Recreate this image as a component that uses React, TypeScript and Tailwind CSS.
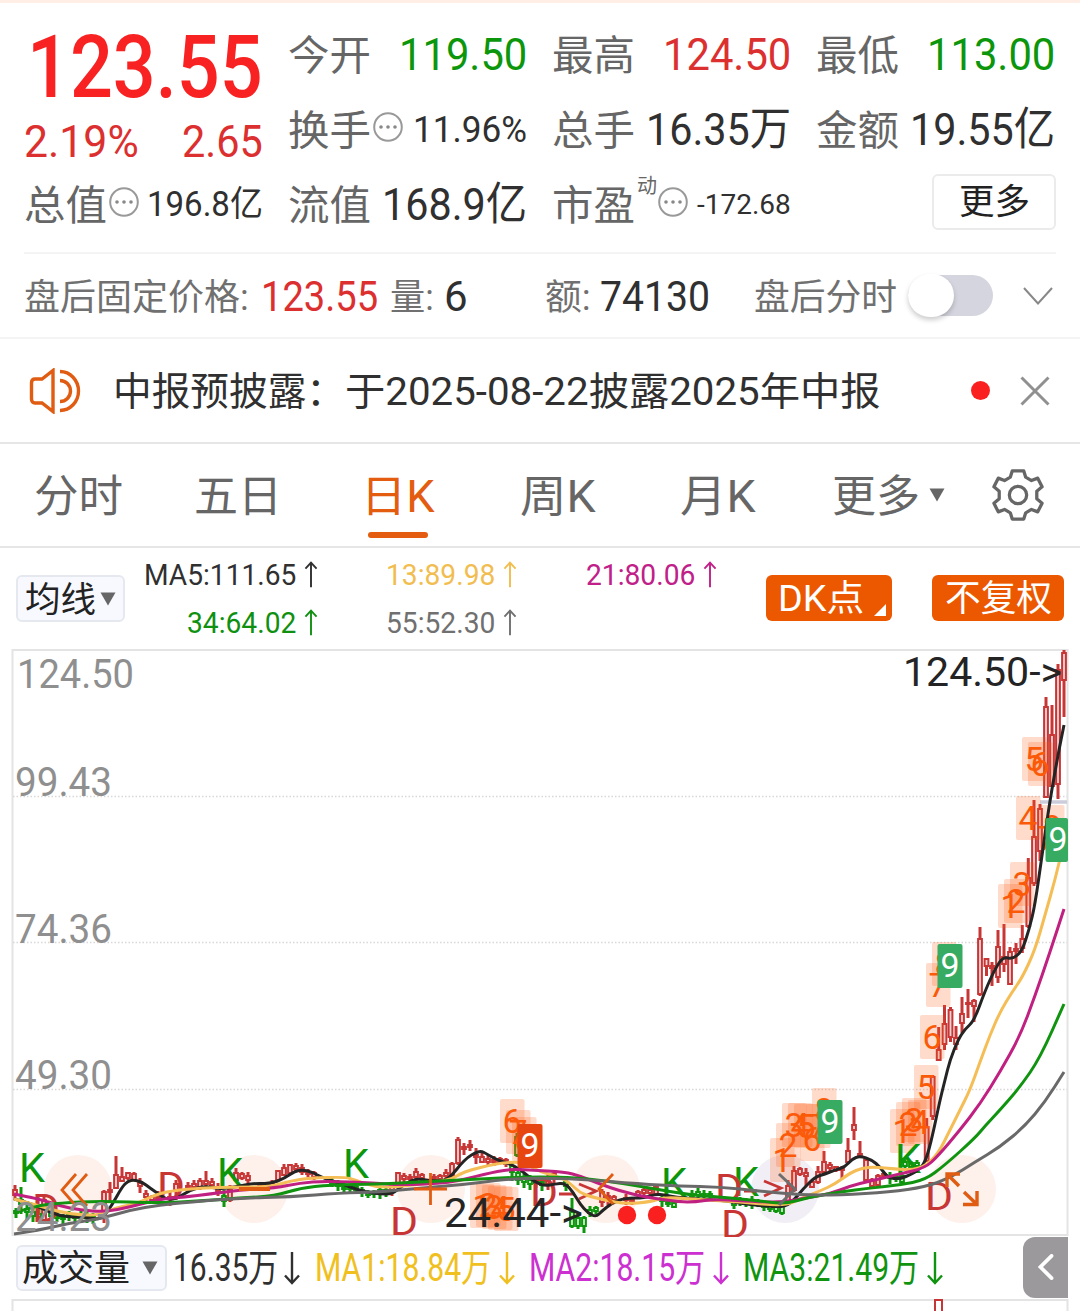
import { useLayoutEffect, useRef, useState } from 'react';
import type { ReactNode } from 'react';

type Point = [number, number];
// x, high, low, body top, body bottom
type Candle = [number, number, number, number, number];

interface FitProps {
  className: string;
  children: ReactNode;
}

// Squeezes a single line of text into the width of its box
function Fit({ className, children }: FitProps) {
  const box = useRef<HTMLSpanElement>(null);
  const text = useRef<HTMLSpanElement>(null);
  const [scale, setScale] = useState(1);

  useLayoutEffect(() => {
    if (box.current && text.current) {
      setScale(box.current.clientWidth / text.current.offsetWidth);
    }
  }, []);

  return (
    <span ref={box} className={`flex shrink-0 items-center whitespace-nowrap leading-none ${className}`}>
      <span ref={text} className="inline-block shrink-0 origin-left" style={{ transform: `scaleX(${scale})` }}>
        {children}
      </span>
    </span>
  );
}

function MoreDots({ className = '' }: { className?: string }) {
  return (
    <svg viewBox="0 0 30 30" className={`size-[30px] shrink-0 ${className}`} fill="none">
      <circle cx="15" cy="15" r="13.8" stroke="#999" strokeWidth="2" />
      <circle cx="8" cy="15" r="1.8" fill="#888" />
      <circle cx="15" cy="15" r="1.8" fill="#888" />
      <circle cx="22" cy="15" r="1.8" fill="#888" />
    </svg>
  );
}

function Trend({ down = false, className = '' }: { down?: boolean; className?: string }) {
  return (
    <svg viewBox="0 0 16 34" className={`shrink-0 ${className}`} fill="none" stroke="currentColor" strokeWidth="2.4">
      <path d={down ? 'M8 1V32M1 24.5L8 32L15 24.5' : 'M8 33V2M1 9.5L8 2L15 9.5'} />
    </svg>
  );
}

function Caret({ className = '' }: { className?: string }) {
  return (
    <svg viewBox="0 0 16 14" className={`h-[14px] w-4 shrink-0 ${className}`} fill="#666">
      <path d="M0.5 0.5H15.5L8 13.5Z" />
    </svg>
  );
}

function Quote({ label, value, tone, size }: { label: string; value: string; tone: string; size: string }) {
  return (
    <div className="flex items-center justify-between">
      <Fit className="w-[83px] pt-[3px] text-[41px] text-[#666]">{label}</Fit>
      <Fit className={`${size} text-[45px] ${tone}`}>{value}</Fit>
    </div>
  );
}

function Header() {
  return (
    <section className="grid h-[236px] grid-cols-[239px_239px_239px_239px] grid-rows-[75px_75px_75px] gap-x-[25px] pt-[11px] pl-6">
      <div className="row-span-2 flex flex-col">
        <div className="flex h-[94px] items-end">
          <Fit className="ml-[3px] h-[88px] w-[236px] text-[88px] font-medium text-[#f92222]">123.55</Fit>
        </div>
        <div className="mt-[7px] flex h-[46px] items-center justify-between text-[#dc3030]">
          <Fit className="w-[115px] text-[45px]">2.19%</Fit>
          <Fit className="w-[81px] text-[45px]">2.65</Fit>
        </div>
      </div>
      <Quote label="今开" value="119.50" tone="text-[#0c960c]" size="w-[128px]" />
      <Quote label="最高" value="124.50" tone="text-[#dc3030]" size="w-[128px]" />
      <Quote label="最低" value="113.00" tone="text-[#0c960c]" size="w-[128px]" />
      <div className="flex items-center">
        <Fit className="w-[83px] pt-[3px] text-[41px] text-[#666]">换手</Fit>
        <MoreDots className="mb-1.5 ml-0.5" />
        <Fit className="ml-auto w-[114px] text-[37px] text-[#303030]">11.96%</Fit>
      </div>
      <Quote label="总手" value="16.35万" tone="text-[#303030]" size="w-[145px]" />
      <Quote label="金额" value="19.55亿" tone="text-[#303030]" size="w-[145px]" />
      <div className="flex items-center">
        <Fit className="w-[83px] pt-[3px] text-[41px] text-[#666]">总值</Fit>
        <MoreDots className="mb-1.5 ml-0.5" />
        <Fit className="ml-auto w-[116px] text-[35px] text-[#303030]">196.8亿</Fit>
      </div>
      <Quote label="流值" value="168.9亿" tone="text-[#303030]" size="w-[145px]" />
      <div className="flex items-center">
        <Fit className="w-[83px] pt-[3px] text-[41px] text-[#666]">市盈</Fit>
        <Fit className="mb-[38px] ml-0.5 w-5 text-[20px] text-[#666]">动</Fit>
        <MoreDots className="mb-1.5 ml-px" />
        <Fit className="ml-auto w-[94px] text-[28px] text-[#303030]">-172.68</Fit>
      </div>
      <div className="-mr-px flex items-center justify-end">
        <button className="mb-[5px] flex h-14 w-[124px] items-center justify-center rounded-md border-2 border-[#ebebeb]">
          <Fit className="w-[71px] text-[35px] text-[#222]">更多</Fit>
        </button>
      </div>
    </section>
  );
}

function AfterHours() {
  return (
    <section className="flex h-[84px] items-center pl-6 text-[42px] text-[#303030]">
      <Fit className="w-[225px] pt-[6px] text-[36px] text-[#707070]">盘后固定价格:</Fit>
      <Fit className="ml-[12px] w-[117px] pt-1 text-[#dc3030]">123.55</Fit>
      <Fit className="ml-[12px] w-[44px] pt-[6px] text-[36px] text-[#707070]">量:</Fit>
      <Fit className="ml-[10px] w-6 pt-1">6</Fit>
      <Fit className="ml-[77px] w-[46px] pt-[6px] text-[36px] text-[#707070]">额:</Fit>
      <Fit className="ml-[9px] w-[110px] pt-1">74130</Fit>
      <Fit className="ml-[44px] w-[143px] pt-[6px] text-[36px] text-[#707070]">盘后分时</Fit>
      <div className="ml-[11px] flex h-[41px] w-[85px] shrink-0 items-center rounded-full bg-[#d5d5df]">
        <div className="h-[43px] w-[46px] shrink-0 rounded-full bg-white shadow-[0_3px_5px_rgba(0,0,0,0.2)]" />
      </div>
      <svg viewBox="0 0 30 18" className="mt-0.5 ml-[30px] h-[18px] w-[30px] shrink-0" fill="none" stroke="#888" strokeWidth="2">
        <path d="M1 1L15 16.5L29 1" />
      </svg>
    </section>
  );
}

function Notice() {
  return (
    <section className="flex h-[105px] items-center pl-[29px]">
      <svg viewBox="0 0 52 46" className="h-[46px] w-[52px] shrink-0" fill="none" stroke="#e05c12" strokeWidth="3.4">
        <path d="M24 2.5V43.5L13 35H6Q2.5 35 2.5 31V15Q2.5 11 6 11H13Z" />
        <path d="M31 12.5A10.5 10.5 0 0 1 31 33.5" />
        <path d="M31 3.5A18.5 19.5 0 0 1 31 42.5" />
      </svg>
      <Fit className="ml-[32px] w-[232px] pt-[3px] text-[39px] text-[#303030]">中报预披露：</Fit>
      <Fit className="w-[536px] pt-[3px] text-[39px] text-[#303030]">于2025-08-22披露2025年中报</Fit>
      <div className="ml-[90px] size-[19px] shrink-0 rounded-full bg-[#fa2020]" />
      <svg viewBox="0 0 30 30" className="ml-[30px] size-[30px] shrink-0" fill="none" stroke="#909090" strokeWidth="3">
        <path d="M1.5 1.5L28.5 28.5M28.5 1.5L1.5 28.5" />
      </svg>
    </section>
  );
}

function Tabs() {
  return (
    <nav className="flex h-[103px] items-center pl-[34px] text-[44px] text-[#666]">
      <Fit className="w-[89px] pt-1">分时</Fit>
      <Fit className="ml-[71px] w-[88px] pt-1">五日</Fit>
      <div className="ml-[79px] flex h-full w-[74px] flex-col items-center">
        <div className="flex h-[88px] items-center pt-[18px]">
          <Fit className="w-[74px] text-[#e35c10]">日K</Fit>
        </div>
        <div className="h-1.5 w-[60px] shrink-0 rounded-full bg-[#e35c10]" />
      </div>
      <Fit className="ml-[85px] w-[76px] pt-1">周K</Fit>
      <Fit className="ml-[84px] w-[76px] pt-1">月K</Fit>
      <Fit className="ml-[76px] w-[88px] pt-1">更多</Fit>
      <Caret className="ml-[9px]" />
      <svg viewBox="-27 -27 54 54" className="ml-[47px] size-[52px] shrink-0" fill="none" stroke="#666" strokeWidth="3.4" strokeLinejoin="round">
        <path d="M-6 -25H6L8 -18.5L14 -15L20.5 -17.5L25 -8.5L19.500 -4V4L25 8.500L20.500 17.500L14 15L8 18.500L6 25H-6L-8 18.500L-14 15L-20.500 17.500L-25 8.500L-19.500 4V-4L-25 -8.500L-20.500 -17.500L-14 -15L-8 -18.500Z" />
        <circle r="9" />
      </svg>
    </nav>
  );
}

function Average({ text, tone, size }: { text: string; tone: string; size: string }) {
  return (
    <div className={`flex items-center justify-end ${tone}`}>
      <Fit className={size}>{text}</Fit>
      <Trend className="mb-px ml-[7px] h-[27px] w-4" />
    </div>
  );
}

function Averages() {
  return (
    <section className="flex h-[97px] shrink-0 pl-4">
      <button className="mt-[27px] flex h-[47px] w-[109px] shrink-0 items-center justify-between rounded-md border-2 border-[#e6e8f0] bg-[#f7f9ff] px-[7px]">
        <Fit className="w-[71px] pt-[3px] text-[35px] text-[#222]">均线</Fit>
        <Caret />
      </button>
      <div className="ml-5 grid h-24 w-[573px] shrink-0 grid-cols-[174px_199px_200px] grid-rows-[48px_48px] pt-[3px] text-[30px]">
        <Average text="MA5:111.65" tone="text-[#303030]" size="w-[152px]" />
        <Average text="13:89.98" tone="text-[#f2bd50]" size="w-[109px]" />
        <Average text="21:80.06" tone="text-[#c02088]" size="w-[109px]" />
        <Average text="34:64.02" tone="text-[#109010]" size="w-[109px]" />
        <Average text="55:52.30" tone="text-[#707070]" size="w-[109px]" />
      </div>
      <button className="mt-[27px] ml-12 flex h-[46px] w-[126px] shrink-0 items-center rounded-md bg-[#ec5800] pl-3">
        <Fit className="w-[86px] pt-0.5 text-[36px] text-white">DK点</Fit>
        <svg viewBox="0 0 12 12" className="mt-6 ml-2.5 size-3" fill="#fff">
          <path d="M12 0V12H0Z" />
        </svg>
      </button>
      <button className="mt-[27px] ml-10 flex h-[46px] w-[132px] shrink-0 items-center justify-center rounded-md bg-[#ec5800]">
        <Fit className="w-[107px] pt-0.5 text-[36px] text-white">不复权</Fit>
      </button>
    </section>
  );
}

const ma5: Point[] = [
  [14, 1199], [30, 1203], [45, 1210], [60, 1216], [75, 1217], [85, 1217], [95, 1219], [103, 1218], [112, 1205], [122, 1187],
  [128, 1181], [134, 1180], [142, 1182], [150, 1188], [160, 1195], [168, 1200], [178, 1198], [190, 1190], [205, 1186], [220, 1189],
  [235, 1187], [255, 1183], [270, 1184], [285, 1178], [295, 1171], [303, 1170], [312, 1172], [325, 1179], [340, 1183], [350, 1187],
  [365, 1192], [380, 1194], [392, 1194], [402, 1186], [412, 1180], [420, 1179], [432, 1181], [445, 1181], [453, 1174], [460, 1165],
  [468, 1157], [475, 1153], [481, 1151], [487, 1154], [497, 1160], [510, 1164], [518, 1168], [528, 1176], [535, 1182], [545, 1186],
  [555, 1184], [565, 1183], [573, 1192], [580, 1204], [588, 1213], [596, 1217], [602, 1211], [612, 1203], [625, 1198], [645, 1198],
  [655, 1194], [665, 1195], [680, 1198], [720, 1200], [745, 1204], [765, 1206], [785, 1207], [795, 1199], [803, 1189], [815, 1177],
  [825, 1174], [835, 1170], [845, 1167], [852, 1159], [860, 1156], [872, 1160], [880, 1167], [888, 1178], [900, 1179], [912, 1174],
  [920, 1169], [926, 1160], [932, 1138], [940, 1100], [945, 1080], [950, 1060], [958, 1040], [965, 1029], [974, 1021], [985, 991],
  [995, 969], [1003, 957], [1013, 959], [1022, 951], [1029, 930], [1035, 905], [1042, 855], [1050, 800], [1058, 755], [1064, 725],
];
const ma13: Point[] = [
  [14, 1199], [40, 1206], [60, 1212], [80, 1215], [100, 1215], [115, 1208], [130, 1205], [140, 1202], [155, 1195], [170, 1191],
  [200, 1188], [235, 1187], [270, 1187], [290, 1181], [310, 1178], [345, 1177], [355, 1180], [375, 1187], [395, 1187], [420, 1184],
  [450, 1180], [460, 1174], [470, 1170], [495, 1164], [512, 1162], [525, 1163], [540, 1172], [560, 1177], [570, 1183], [580, 1193],
  [592, 1197], [605, 1200], [625, 1204], [650, 1202], [665, 1197], [690, 1199], [740, 1202], [785, 1206], [800, 1199], [820, 1191],
  [835, 1184], [850, 1173], [862, 1168], [875, 1167], [895, 1169], [912, 1170], [925, 1166], [938, 1154], [950, 1130], [960, 1110],
  [970, 1090], [980, 1062], [990, 1035], [1000, 1012], [1012, 992], [1022, 978], [1035, 950], [1045, 915], [1055, 880], [1064, 842],
];
const ma21: Point[] = [
  [14, 1194], [40, 1199], [60, 1206], [80, 1210], [105, 1212], [130, 1207], [160, 1199], [185, 1197], [210, 1194], [240, 1190],
  [275, 1188], [300, 1183], [325, 1181], [375, 1183], [400, 1185], [450, 1183], [485, 1174], [510, 1169], [530, 1170], [565, 1172],
  [580, 1176], [600, 1184], [620, 1191], [645, 1197], [680, 1202], [695, 1202], [715, 1199], [760, 1202], [785, 1202], [805, 1198],
  [830, 1194], [850, 1186], [870, 1181], [900, 1174], [925, 1168], [938, 1156], [960, 1130], [980, 1104], [1000, 1072], [1020, 1036],
  [1035, 996], [1050, 952], [1064, 909],
];
const ma34: Point[] = [
  [14, 1213], [35, 1206], [60, 1203], [100, 1201], [160, 1203], [200, 1201], [240, 1198], [275, 1196], [300, 1188], [330, 1185],
  [380, 1184], [400, 1183], [440, 1181], [480, 1179], [520, 1177], [560, 1177], [590, 1179], [620, 1183], [650, 1188], [690, 1195],
  [720, 1197], [760, 1201], [785, 1204], [810, 1197], [840, 1192], [870, 1188], [900, 1185], [925, 1180], [945, 1165], [975, 1138],
  [985, 1126], [1000, 1110], [1020, 1087], [1040, 1058], [1064, 1004],
];
const ma55: Point[] = [
  [14, 1234], [40, 1230], [70, 1223], [100, 1219], [130, 1210], [160, 1205], [190, 1202], [240, 1198], [290, 1197], [340, 1193],
  [380, 1192], [420, 1188], [460, 1185], [500, 1180], [530, 1178], [580, 1179], [640, 1184], [680, 1186], [720, 1187], [760, 1191],
  [800, 1195], [840, 1195], [890, 1192], [925, 1187], [950, 1178], [975, 1162], [1000, 1147], [1025, 1126], [1045, 1102], [1064, 1072],
];

const rising: Candle[] = [
  [15, 1185, 1200, 1190, 1195], [44, 1196, 1222, 1200, 1220], [104, 1190, 1223, 1192, 1212], [110, 1182, 1202, 1190, 1192],
  [116, 1156, 1189, 1175, 1188], [122, 1167, 1182, 1177, 1181], [128, 1172, 1180, 1173, 1178], [134, 1172, 1181, 1174, 1180],
  [140, 1178, 1193, 1183, 1186], [146, 1190, 1201, 1194, 1197], [152, 1195, 1202, 1197, 1200], [158, 1191, 1202, 1196, 1198],
  [170, 1192, 1206, 1197, 1199], [176, 1180, 1200, 1184, 1190], [188, 1182, 1192, 1186, 1188], [194, 1180, 1190, 1184, 1187],
  [200, 1178, 1190, 1181, 1187], [206, 1171, 1188, 1181, 1184], [212, 1178, 1188, 1182, 1185], [218, 1183, 1196, 1187, 1191],
  [230, 1185, 1202, 1190, 1200], [236, 1168, 1182, 1173, 1180], [242, 1172, 1180, 1174, 1178], [248, 1172, 1187, 1176, 1180],
  [260, 1183, 1191, 1186, 1189], [266, 1182, 1191, 1184, 1188], [272, 1180, 1189, 1183, 1187], [278, 1170, 1181, 1171, 1180],
  [284, 1164, 1176, 1168, 1175], [290, 1164, 1174, 1165, 1173], [296, 1163, 1172, 1166, 1169], [302, 1164, 1175, 1168, 1172],
  [308, 1169, 1177, 1172, 1174], [314, 1171, 1180, 1173, 1177], [392, 1182, 1196, 1186, 1190], [398, 1172, 1185, 1173, 1183],
  [404, 1173, 1182, 1176, 1179], [410, 1174, 1182, 1177, 1179], [416, 1168, 1182, 1172, 1177], [422, 1173, 1181, 1175, 1178],
  [434, 1174, 1182, 1177, 1179], [440, 1174, 1182, 1176, 1179], [446, 1169, 1180, 1173, 1176], [452, 1162, 1178, 1164, 1175],
  [458, 1137, 1165, 1140, 1163], [464, 1143, 1155, 1147, 1149], [470, 1140, 1151, 1145, 1147], [476, 1148, 1164, 1155, 1157],
  [482, 1153, 1163, 1157, 1162], [488, 1155, 1165, 1159, 1162], [494, 1156, 1166, 1160, 1162], [500, 1157, 1164, 1159, 1162],
  [506, 1158, 1167, 1160, 1164], [548, 1174, 1190, 1180, 1184], [554, 1170, 1184, 1174, 1178], [602, 1189, 1207, 1192, 1202],
  [608, 1192, 1205, 1196, 1198], [614, 1195, 1203, 1197, 1200], [626, 1194, 1205, 1198, 1200], [632, 1197, 1205, 1200, 1202],
  [638, 1190, 1197, 1192, 1195], [644, 1188, 1195, 1190, 1193], [650, 1187, 1195, 1190, 1193], [656, 1186, 1196, 1187, 1194],
  [788, 1180, 1204, 1186, 1202], [794, 1166, 1192, 1171, 1190], [800, 1167, 1176, 1169, 1174], [806, 1168, 1186, 1173, 1176],
  [812, 1180, 1188, 1182, 1187], [818, 1166, 1184, 1172, 1182], [824, 1151, 1173, 1162, 1172], [830, 1162, 1172, 1165, 1168],
  [836, 1166, 1172, 1167, 1170], [842, 1166, 1179, 1168, 1170], [848, 1138, 1164, 1151, 1162], [854, 1107, 1140, 1125, 1130],
  [860, 1141, 1158, 1154, 1156], [866, 1159, 1182, 1160, 1180], [872, 1178, 1187, 1180, 1186], [878, 1174, 1187, 1176, 1185],
  [884, 1172, 1178, 1174, 1176], [926.7, 1118, 1162, 1127, 1161], [932.7, 1075, 1120, 1077, 1116], [938.7, 1027, 1061, 1050, 1060],
  [944.5, 1005, 1050, 1024, 1044], [950.5, 1007, 1042, 1010, 1037], [956, 1026, 1050, 1038, 1044], [962, 997, 1033, 1014, 1023],
  [968, 989, 1018, 1003, 1004], [974, 999, 1022, 1001, 1006], [980, 927, 996, 939, 994], [986.5, 958, 976, 959, 966],
  [992, 962, 986, 966, 968], [998, 930, 983, 947, 977], [1004, 924, 972, 957, 964], [1010, 947, 985, 952, 984],
  [1016, 943, 964, 949, 951], [1022.3, 925, 953, 939, 948], [1028.3, 858, 928, 878, 926], [1034, 800, 886, 837, 883],
  [1040, 804, 861, 809, 851], [1046, 697, 798, 707, 797], [1052, 705, 787, 735, 786], [1058, 664, 799, 670, 784], [1064, 650, 717, 653, 680],
];
const falling: Candle[] = [
  [16, 1208, 1218, 1211, 1213], [21, 1187, 1214, 1200, 1204], [27, 1205, 1220, 1209, 1212], [33, 1204, 1222, 1212, 1216],
  [39, 1208, 1222, 1214, 1217], [51, 1209, 1222, 1212, 1216], [57, 1210, 1222, 1216, 1218], [63, 1214, 1224, 1217, 1219],
  [69, 1211, 1221, 1215, 1217], [75, 1213, 1222, 1216, 1218], [81, 1211, 1221, 1215, 1218], [87, 1212, 1223, 1216, 1218],
  [93, 1213, 1224, 1216, 1220], [224, 1190, 1207, 1196, 1201], [332, 1178, 1187, 1181, 1184], [338, 1180, 1191, 1184, 1186],
  [344, 1184, 1193, 1187, 1189], [350, 1184, 1193, 1187, 1189], [356, 1185, 1193, 1187, 1190], [362, 1187, 1197, 1190, 1192],
  [368, 1190, 1198, 1192, 1195], [374, 1190, 1198, 1192, 1194], [380, 1186, 1199, 1190, 1194], [386, 1187, 1197, 1190, 1193],
  [512, 1162, 1181, 1166, 1172], [517, 1133, 1157, 1137, 1155], [518, 1170, 1185, 1173, 1180], [524, 1174, 1188, 1178, 1182],
  [530, 1175, 1190, 1180, 1184], [536, 1176, 1188, 1180, 1183], [542, 1178, 1191, 1182, 1185], [566, 1178, 1191, 1182, 1186],
  [572, 1198, 1228, 1212, 1226], [578, 1213, 1229, 1218, 1226], [584, 1216, 1233, 1218, 1226], [590, 1206, 1217, 1210, 1213],
  [596, 1206, 1214, 1208, 1211], [662, 1194, 1207, 1198, 1201], [668, 1201, 1207, 1202, 1204], [674, 1201, 1208, 1203, 1207],
  [692, 1190, 1199, 1194, 1196], [698, 1188, 1199, 1192, 1195], [704, 1190, 1199, 1194, 1196], [710, 1191, 1199, 1194, 1196],
  [734, 1199, 1209, 1202, 1205], [740, 1197, 1206, 1200, 1203], [746, 1198, 1207, 1201, 1204], [752, 1196, 1209, 1201, 1204],
  [758, 1199, 1207, 1202, 1204], [764, 1201, 1211, 1204, 1207], [770, 1202, 1212, 1206, 1209], [776, 1203, 1213, 1206, 1211],
  [782, 1203, 1215, 1206, 1213], [890, 1172, 1184, 1176, 1178], [896, 1175, 1182, 1177, 1179], [902, 1172, 1184, 1176, 1182],
  [905, 1160, 1168, 1162, 1166], [911, 1161, 1169, 1163, 1167], [917, 1160, 1168, 1163, 1166],
];

// x, y, digit
const counts: [number, number, string][] = [
  [470, 1184, '1'], [476, 1183, '2'], [482, 1185, '3'], [488, 1186, '4'], [494, 1187, '5'],
  [500, 1099, '6'], [506, 1110, '7'], [512, 1117, '8'],
  [770, 1138, '1'], [776, 1123, '2'], [782, 1103, '3'], [788, 1103, '4'], [794, 1104, '5'], [800, 1117, '6'], [806, 1104, '7'], [812, 1088, '8'],
  [890, 1109, '1'], [896, 1102, '2'], [902, 1098, '3'], [908, 1100, '4'],
  [914, 1065, '5'], [920, 1015, '6'], [926, 963, '7'], [932, 942, '8'],
  [998, 884, '1'], [1004, 879, '2'], [1010, 862, '3'], [1016, 796, '4'], [1022, 737, '5'], [1028, 742, '6'], [1035, 816, '7'], [1040, 805, '8'],
];
const nines: [number, number, number, string][] = [
  [517.5, 1124, 25, '#e84610'], [817.5, 1100, 25, '#38ab62'], [937.5, 944, 25, '#38ab62'], [1045.5, 818, 22.5, '#38ab62'],
];

const buys: Point[] = [[19, 1182], [217, 1187], [343, 1178], [661, 1197], [733, 1196], [895, 1173]];
const sells: Point[] = [[32, 1222], [157, 1200], [390, 1235], [530, 1206], [715, 1202], [721, 1238], [925, 1210]];
const scale: [string, number, number, number][] = [
  ['124.50', 17, 688, 117], ['99.43', 15, 796, 97], ['74.36', 15, 943, 97], ['49.30', 15, 1089, 97], ['24.23', 15, 1231, 97],
];

function Candles({ data, color, fill }: { data: Candle[]; color: string; fill: string }) {
  return (
    <g stroke={color} strokeWidth="2" fill={fill}>
      {data.map(([x, high, low, top, bottom]) => (
        <g key={`${x}-${high}`}>
          <path d={`M${x} ${high}V${low}`} strokeWidth="3" />
          <rect x={x - 1.9} y={top} width="3.8" height={Math.max(bottom - top, 1)} />
        </g>
      ))}
    </g>
  );
}

// Rounds the corners by running the curve through the middle of every step
function curve(data: Point[]) {
  const steps = data.slice(1, -1).map(([x, y], i) => {
    const [nextX, nextY] = data[i + 2];
    return `Q${x} ${y} ${(x + nextX) / 2} ${(y + nextY) / 2}`;
  });
  return `M${data[0].join(' ')}${steps.join('')}L${data[data.length - 1].join(' ')}`;
}

function Line({ data, color }: { data: Point[]; color: string }) {
  return <path d={curve(data)} stroke={color} fill="none" strokeWidth="3" />;
}

function Chart() {
  return (
    <svg viewBox="0 645 1080 592" className="h-[592px] w-[1080px] shrink-0 font-[Roboto]">
      <rect x="12.5" y="650" width="1055" height="585" fill="none" stroke="#e4e4e4" strokeWidth="2" />
      <path d="M13 796.5H1067M13 942.5H1067M13 1089.5H1067" stroke="#d8d8d8" strokeWidth="1.3" strokeDasharray="1.5 2" />

      {/* 手势圆形按钮 */}
      {[78, 254, 431, 606, 962].map(x => (
        <circle key={x} cx={x} cy="1189" r="34" fill="#fef0ea" />
      ))}
      <circle cx="785" cy="1189" r="34" fill="#f1eff5" />

      <path d="M1040 802H1067" stroke="#cccddb" strokeWidth="3.5" />
      <Candles data={rising} color="#c73535" fill="#f6d5d5" />
      <Candles data={falling} color="#0c960c" fill="#d0ecd0" />

      {counts.map(([x, y, digit]) => (
        <g key={`${x}-${y}`}>
          {digit === '7' && x > 1030 ? null : (
            <rect x={x} y={y} width="24.5" height="44" rx="2" fill="#ff5a10" fillOpacity="0.22" />
          )}
          <text x={x + 2.5} y={y + 33.5} fontSize="33" textLength="19" lengthAdjust="spacingAndGlyphs" fill="#fa5a08">{digit}</text>
        </g>
      ))}

      <g fontSize="40" fill="#0c960c">
        {buys.map(([x, y]) => (
          <text key={x} x={x} y={y} textLength="26" lengthAdjust="spacingAndGlyphs">K</text>
        ))}
      </g>
      <g fontSize="39" fill="#c73535">
        {sells.map(([x, y]) => (
          <text key={x} x={x} y={y} textLength="28" lengthAdjust="spacingAndGlyphs">D</text>
        ))}
      </g>
      <path d="M559 1194H575M579 1184L596 1191L579 1199M744 1191H757M764 1181L781 1188L764 1196" fill="none" stroke="#c73535" strokeWidth="2.8" />

      <Line data={ma5} color="#242424" />
      <Line data={ma13} color="#f5bd55" />
      <Line data={ma21} color="#c02080" />
      <Line data={ma34} color="#109410" />
      <Line data={ma55} color="#696969" />

      <g fill="none" stroke="#e05c12" strokeWidth="2.8">
        <path d="M76 1174L62 1190L76 1206M87 1174L73 1190L87 1206" />
        <path d="M239 1189H270" strokeWidth="4" />
        <path d="M414 1189H447M430.5 1173V1205" />
        <path d="M613 1174L599 1189L613 1204" />
        <path d="M960 1174H947V1187M947 1174L959 1186M963 1204.500H977V1191M977 1204.500L964 1192" strokeWidth="3.4" />
      </g>
      <path d="M779 1174L795 1189L779 1205" fill="none" stroke="#6e6e6e" strokeWidth="3" />

      {nines.map(([x, y, width, color]) => (
        <g key={x}>
          <rect x={x} y={y} width={width} height="44" rx="2" fill={color} />
          <text x={x + 3} y={y + 33} fontSize="33" textLength="19" lengthAdjust="spacingAndGlyphs" fill="#fff">9</text>
        </g>
      ))}
      <circle cx="627" cy="1215" r="9.2" fill="#fa2020" />
      <circle cx="657" cy="1215" r="9.2" fill="#fa2020" />

      <g fontSize="40" fill="#8f8f8f">
        {scale.map(([label, x, y, width]) => (
          <text key={label} x={x} y={y} textLength={width} lengthAdjust="spacingAndGlyphs">{label}</text>
        ))}
      </g>
      <g fontSize="40" fill="#242424">
        <text x="903" y="686" textLength="159" lengthAdjust="spacingAndGlyphs">124.50-&gt;</text>
        <text x="444" y="1227" textLength="139" lengthAdjust="spacingAndGlyphs">24.44-&gt;</text>
      </g>
    </svg>
  );
}

function Volume() {
  return (
    <section className="flex h-[62px] shrink-0 items-center pl-4 text-[38px]">
      <button className="flex h-[46px] w-[151px] shrink-0 items-center justify-between rounded-md border-2 border-[#e6e8f0] bg-[#f7f9ff] pr-[7px] pl-1">
        <Fit className="w-[108px] pt-0.5 text-[36px] text-[#222]">成交量</Fit>
        <Caret />
      </button>
      <Fit className="ml-[6px] w-[105px] text-[#303030]">16.35万</Fit>
      <Trend down className="ml-1.5 h-[34px] w-4 text-[#303030]" />
      <Fit className="ml-[15px] w-[176px] text-[#f0c020]">MA1:18.84万</Fit>
      <Trend down className="ml-2 h-[34px] w-4 text-[#f0c020]" />
      <Fit className="ml-[14px] w-[176px] text-[#cc30d0]">MA2:18.15万</Fit>
      <Trend down className="ml-2 h-[34px] w-4 text-[#cc30d0]" />
      <Fit className="ml-[14px] w-[176px] text-[#109410]">MA3:21.49万</Fit>
      <Trend down className="ml-2 h-[34px] w-4 text-[#109410]" />
      <button className="mb-0.5 ml-[80px] flex h-[61px] w-[45px] shrink-0 items-center justify-center rounded-l-xl bg-[#9b999b]">
        <svg viewBox="0 0 16 28" className="h-[26px] w-4" fill="none" stroke="#fff" strokeWidth="4" strokeLinecap="round">
          <path d="M14 2L2 14L14 26" />
        </svg>
      </button>
    </section>
  );
}

export default function App() {
  return (
    <main className="flex h-[1311px] w-[1080px] flex-col overflow-hidden bg-white font-[Roboto,'Noto_Sans_CJK_SC',sans-serif]">
      <div className="h-[3px] shrink-0 bg-[#ffeee6]" />
      <div className="pt-[3px]">
        <Header />
      </div>
      <div className="mx-6 mt-2.5 h-0.5 shrink-0 bg-[#f4f4f4]" />
      <AfterHours />
      <div className="h-0.5 shrink-0 bg-[#f4f4f4]" />
      <Notice />
      <div className="h-0.5 shrink-0 bg-[#e6e6e6]" />
      <Tabs />
      <div className="h-0.5 shrink-0 bg-[#e6e6e6]" />
      <Averages />
      <Chart />
      <Volume />
      <svg viewBox="0 1299 1080 12" className="h-3 w-[1080px] shrink-0" fill="none">
        <path d="M12.500 1320V1300H1067.500V1320" stroke="#e4e4e4" strokeWidth="2" />
        <rect x="935" y="1300" width="7" height="20" stroke="#c73535" strokeWidth="2" />
      </svg>
    </main>
  );
}
